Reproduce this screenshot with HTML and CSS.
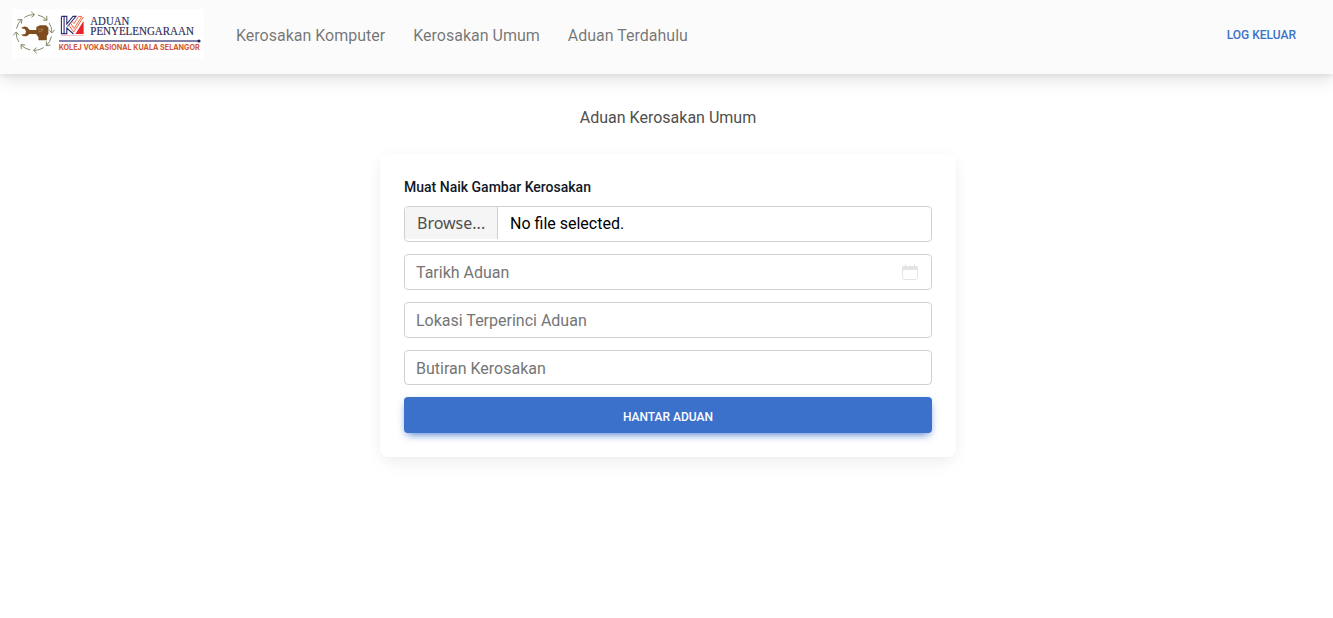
FILE: index.html
```html
<!DOCTYPE html>
<html lang="ms">
<head>
<meta charset="utf-8">
<title>Aduan Kerosakan Umum</title>
<link rel="stylesheet" href="styles.css">
</head>
<body>
<nav class="navbar">
  <a class="brand" href="#">
    <svg width="192" height="49" viewBox="12 9 192 49" role="img" aria-label="Aduan Penyelengaraan">
      <defs>
        <g id="arrow" fill="none" stroke="#76845c" stroke-width=".9">
          <path d="M24.4 17.4Q28.8 14.4 34.2 14.6M31.2 11.8L34.6 14.7L31.4 17.4"/>
        </g>
      </defs>
      <rect x="12" y="9" width="192" height="49" fill="#fff"/>
      <use href="#arrow"/>
      <use href="#arrow" transform="rotate(45 34 32.5)"/>
      <use href="#arrow" transform="rotate(90 34 32.5)"/>
      <use href="#arrow" transform="rotate(135 34 32.5)"/>
      <use href="#arrow" transform="rotate(180 34 32.5)"/>
      <use href="#arrow" transform="rotate(225 34 32.5)"/>
      <use href="#arrow" transform="rotate(270 34 32.5)"/>
      <use href="#arrow" transform="rotate(315 34 32.5)"/>
      <path fill="#7d4d20" d="M21 28Q24 25.4 27 27L29.6 30H37V34H29.6L27 36Q24 37 21 34.8L25.3 34L26 31.5L25 29.2Z"/>
      <path fill="#7d4d20" d="M36.4 27L40 25.2H46L48.4 27.4V34L46.8 36V40.2H38.4V37L36 34Z"/>
      <path d="M38 29.2H43L41.4 31.7H38.4" fill="none" stroke="#c9aa84" stroke-width=".5"/>
      <g fill="none">
        <path d="M61.4 16.4V33.6H66.8V28L73.5 34M61.4 16.4H66.8V24L73 16.4H76L67.5 26.5M64.1 16.4V33.6" stroke="#2d2f72" stroke-width="1.1"/>
        <path d="M68.8 25.2L73.8 32L83.4 17M70.6 23.2L74 28.6L81.8 16.4H78.6L74 23.5L72 21.5" stroke="#ef6b45" stroke-width="1"/>
        <path d="M61 35.4H83.6" stroke="#f39ba3" stroke-width=".7"/>
      </g>
      <path d="M83.6 21V34H75.4Z" fill="#e8232b"/>
      <text x="90.3" y="24.8" textLength="39" lengthAdjust="spacingAndGlyphs" class="logo-title">ADUAN</text>
      <text x="90.3" y="34.7" textLength="103.5" lengthAdjust="spacingAndGlyphs" class="logo-title">PENYELENGARAAN</text>
      <path d="M59 41H199" stroke="#5b5788" stroke-width="1.7"/>
      <circle cx="199" cy="41" r="1.6" fill="#292463"/>
      <text x="58.7" y="50" textLength="141" lengthAdjust="spacingAndGlyphs" class="logo-school">KOLEJ VOKASIONAL KUALA SELANGOR</text>
    </svg>
  </a>
  <div class="nav-links">
    <a href="#">Kerosakan Komputer</a>
    <a href="#">Kerosakan Umum</a>
    <a href="#">Aduan Terdahulu</a>
  </div>
  <a class="logout" href="#">LOG KELUAR</a>
</nav>
<main class="content">
  <h1 class="page-title">Aduan Kerosakan Umum</h1>
  <form class="card">
    <div class="upload-label">Muat Naik Gambar Kerosakan</div>
    <div class="field file-field">
      <span class="browse">Browse...</span>
      <span class="file-name">No file selected.</span>
    </div>
    <div class="field date-field">
      <input type="text" placeholder="Tarikh Aduan">
      <svg class="calendar" width="18" height="18" viewBox="0 0 18 18">
        <path d="M4.5 1V4M13.5 1V4" stroke="#e4e4e4" fill="none"/>
        <rect x="1.5" y="3.5" width="15" height="13" rx="2" fill="#fff" stroke="#e4e4e4"/>
        <path d="M1 7V5Q1 3 3 3H15Q17 3 17 5V7Z" fill="#e4e4e4"/>
      </svg>
    </div>
    <div class="field"><input type="text" placeholder="Lokasi Terperinci Aduan"></div>
    <div class="field details-field"><input type="text" placeholder="Butiran Kerosakan"></div>
    <button class="submit" type="button">HANTAR ADUAN</button>
  </form>
</main>
</body>
</html>
```
FILE: styles.css
```css
* { box-sizing: border-box; }
body {
  margin: 0;
  min-height: 100vh;
  background: #fff;
  font-family: Roboto, sans-serif;
  font-size: 16px;
  line-height: 1.6;
  color: #4f4f4f;
}
a { text-decoration: none; }
.navbar {
  position: relative;
  display: flex;
  align-items: flex-start;
  height: 74px;
  padding: 9px 37px 0 12px;
  background: #fbfbfb;
  box-shadow: 0 4px 12px 0 rgba(0, 0, 0, .07), 0 2px 4px rgba(0, 0, 0, .05), 0 10px 20px rgba(0, 0, 0, .05);
}
.brand, .brand svg { display: block; }
.logo-title {
  font: 11.5px "Liberation Serif", serif;
  fill: #292855;
  stroke: #292855;
  stroke-width: .15px;
}
.logo-school {
  font: 700 7.4px Inter, sans-serif;
  fill: #d4562e;
}
.nav-links {
  display: flex;
  gap: 28px;
  margin-left: 32px;
  padding-top: 14px;
}
.nav-links a { color: rgba(0, 0, 0, .55); }
.logout {
  margin-left: auto;
  padding-top: 17px;
  font-size: 12px;
  font-weight: 500;
  line-height: 18px;
  color: #3b71ca;
}
.content {
  display: flex;
  flex-direction: column;
  align-items: center;
  padding: 31px 0 48px 3px;
}
.page-title {
  margin: 0 0 23px;
  font-size: 16px;
  font-weight: 400;
}
.card {
  display: flex;
  flex-direction: column;
  gap: 12px;
  width: 576px;
  height: 303px;
  padding: 24px;
  border-radius: 8px;
  background: #fff;
  box-shadow: 0 2px 15px -3px rgba(0, 0, 0, .07), 0 10px 20px -2px rgba(0, 0, 0, .04);
}
.upload-label {
  height: 20px;
  margin-bottom: -4px;
  font-size: 14px;
  font-weight: 500;
  line-height: 18px;
  color: #111827;
}
.field {
  display: flex;
  align-items: center;
  height: 36px;
  flex: none;
  border: 1px solid #d0d0d0;
  border-radius: 4px;
  background: #fff;
}
.field input {
  flex: 1;
  min-width: 0;
  padding: 2px 11px 0;
  border: 0;
  outline: 0;
  background: transparent;
  font: 16px Roboto, sans-serif;
}
.field input::placeholder { color: #757575; opacity: 1; }
.file-field { align-items: flex-start; line-height: 32px; }
.browse {
  width: 93px;
  height: 32px;
  padding-left: 12px;
  border-right: 1px solid #d0d0d0;
  border-radius: 3px 0 0 0;
  background: #f5f5f5;
  font-family: "Noto Sans", sans-serif;
}
.file-name { margin-left: 12px; color: #000; line-height: 34px; }
.calendar { margin-right: 12px; }
.details-field { height: 35px; }
.submit {
  height: 36px;
  flex: none;
  padding: 4px 0 0;
  border: 0;
  border-radius: 4px;
  background: #3b71ca;
  color: #fff;
  font: 500 12px/18px Roboto, sans-serif;
  box-shadow: 0 4px 9px -4px #3b71ca, 0 3px 8px rgba(59, 113, 202, .2);
}
```
